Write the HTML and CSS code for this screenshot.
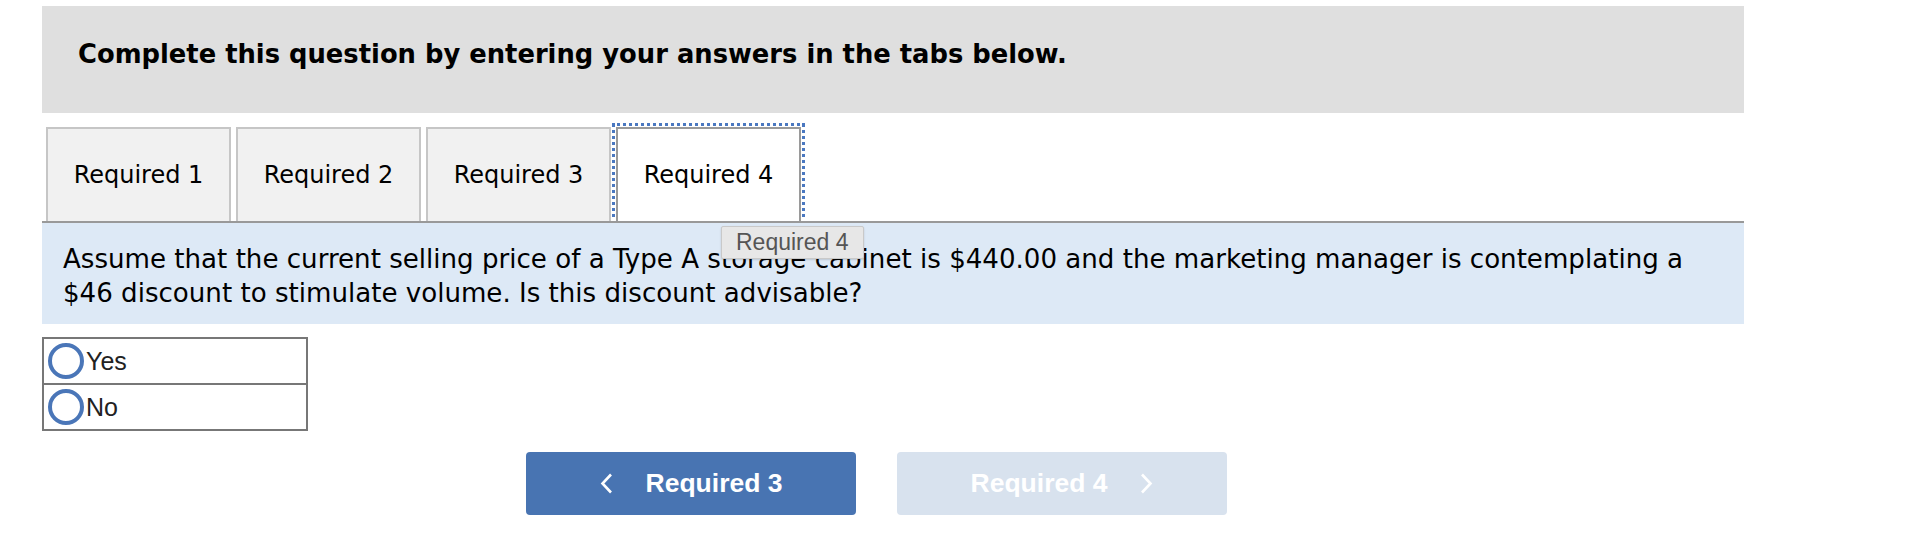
FILE: index.html
```html
<!DOCTYPE html>
<html>
<head>
<meta charset="utf-8">
<link rel="stylesheet" href="styles.css">
</head>
<body>
<div class="page">
  <div class="header">Complete this question by entering your answers in the tabs below.</div>
  <div class="tabs">
    <div class="tab">Required 1</div>
    <div class="tab">Required 2</div>
    <div class="tab">Required 3</div>
    <div class="tab active">Required 4</div>
  </div>
  <div class="panel">
    <p class="question">Assume that the current selling price of a Type A storage cabinet is $440.00 and the marketing manager is contemplating a $46 discount to stimulate volume. Is this discount advisable?</p>
    <div class="tooltip">Required 4</div>
  </div>
  <div class="choices">
    <div class="choice"><span class="radio"></span><span class="label">Yes</span></div>
    <div class="choice"><span class="radio"></span><span class="label">No</span></div>
  </div>
  <div class="nav">
    <button class="btn prev"><svg class="chev" width="13" height="21" viewBox="0 0 13 21"><path d="M11 1.5 L2.5 10.5 L11 19.5" fill="none" stroke="#fff" stroke-width="2.6"/></svg><span>Required 3</span></button>
    <button class="btn next"><span>Required 4</span><svg class="chev" width="13" height="21" viewBox="0 0 13 21"><path d="M2 1.5 L10.5 10.5 L2 19.5" fill="none" stroke="#fff" stroke-width="2.6"/></svg></button>
  </div>
</div>
</body>
</html>
```
FILE: styles.css
```css
html, body {
  margin: 0;
  padding: 0;
  background: #fff;
}
.page {
  position: relative;
  margin-left: 42px;
  width: 1702px;
  padding-top: 6px;
  font-family: "DejaVu Sans", Verdana, sans-serif;
  color: #000;
}
.header {
  box-sizing: border-box;
  height: 107px;
  background: #dfdfdf;
  padding: 33px 0 0 36px;
  font-weight: bold;
  font-size: 25.8px;
  line-height: 30px;
}
.tabs {
  display: flex;
  gap: 5px;
  padding-left: 4px;
  margin-top: 14px;
}
.tab {
  box-sizing: border-box;
  width: 185px;
  height: 94px;
  background: #f1f1f1;
  border: 2px solid #c6c6c6;
  border-bottom: none;
  display: flex;
  align-items: center;
  justify-content: center;
  font-size: 24px;
}
.tab.active {
  background: #fff;
  border-color: #9a9a9a;
  outline: 3px dotted #4a78c0;
  outline-offset: 1px;
}
.panel {
  position: relative;
  background: #dde9f6;
  border-top: 2px solid #999;
  padding: 19px 20px 14px 21px;
}
.question {
  margin: 0;
  font-size: 26.1px;
  line-height: 34px;
}
.tooltip {
  position: absolute;
  left: 679px;
  top: 3px;
  padding: 3px 14px 3px 14px;
  background: #e7e7e7;
  border: 1px solid #c9c9c9;
  border-radius: 2px;
  box-shadow: 0 1px 2px rgba(0,0,0,0.15);
  font-family: "Liberation Sans", Arial, sans-serif;
  font-size: 23px;
  line-height: 25px;
  color: #555;
}
.choices {
  margin-top: 13px;
  width: 266px;
  box-sizing: border-box;
  border: 2px solid #777;
}
.choice {
  height: 44px;
  display: flex;
  align-items: center;
  padding-left: 4px;
  font-family: "Liberation Sans", Arial, sans-serif;
  font-size: 25px;
  color: #222;
}
.choice + .choice {
  border-top: 2px solid #777;
}
.radio {
  box-sizing: border-box;
  width: 36px;
  height: 36px;
  border: 4px solid #4a76b8;
  border-radius: 50%;
  margin-right: 2px;
  background: #fff;
}
.nav {
  display: flex;
  gap: 41px;
  padding-left: 484px;
  margin-top: 21px;
}
.btn {
  box-sizing: border-box;
  width: 330px;
  height: 63px;
  border: none;
  border-radius: 4px;
  display: flex;
  align-items: center;
  justify-content: center;
  gap: 33px;
  font-family: "Liberation Sans", Arial, sans-serif;
  font-weight: bold;
  font-size: 26.5px;
  color: #fff;
  padding: 0;
}
.btn.prev {
  background: #4874b2;
}
.btn.next {
  background: #d8e2ee;
}
.chev {
  display: block;
}
```
